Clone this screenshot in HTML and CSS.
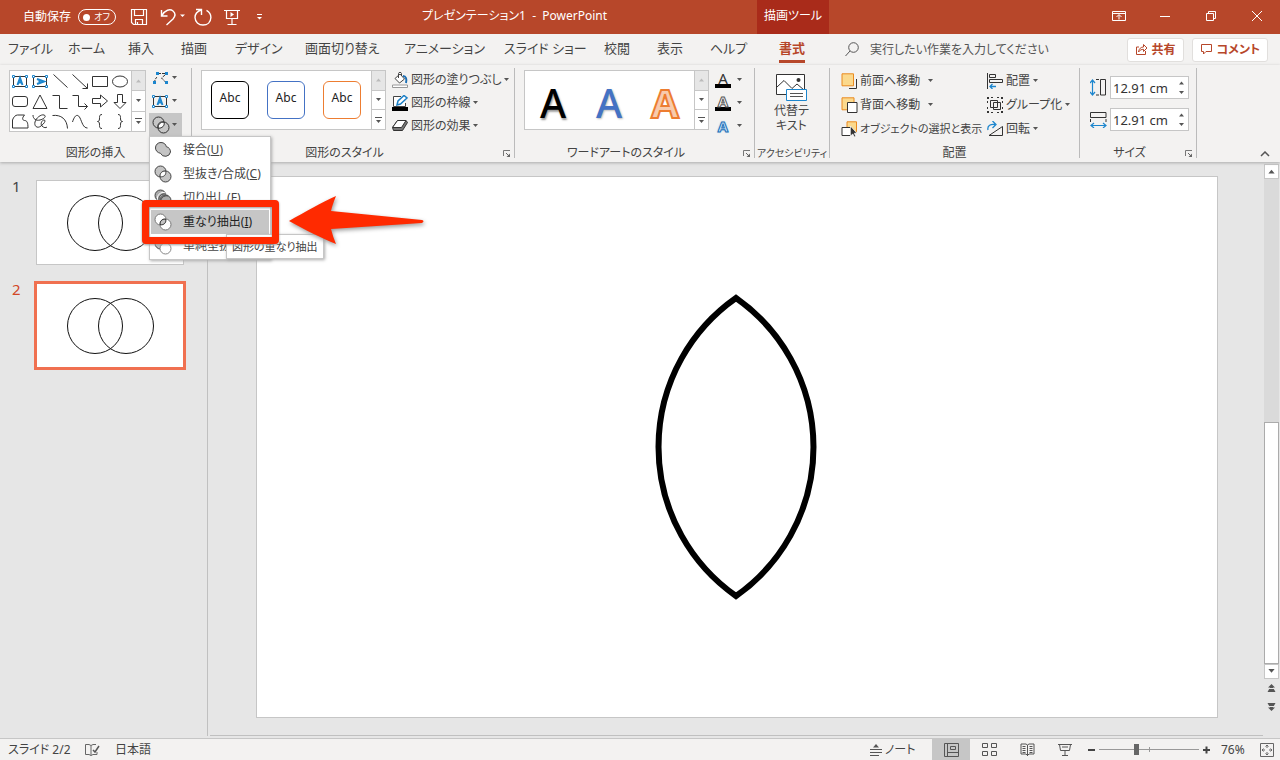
FILE: index.html
```html
<!DOCTYPE html>
<html lang="ja">
<head>
<meta charset="utf-8">
<title>プレゼンテーション1 - PowerPoint</title>
<link rel="stylesheet" href="styles.css">
</head>
<body>
<svg class="defs" aria-hidden="true">
  <symbol id="caret" viewBox="0 0 7 4"><path d="M1 0h5L3.5 3z" fill="#555"/></symbol>
  <symbol id="caret-up" viewBox="0 0 7 4"><path d="M1 3.500h5L3.500 .5z" fill="currentColor"/></symbol>
  <symbol id="caret-more" viewBox="0 0 9 8"><path d="M1 1.500h7" stroke="#555"/><path d="M2 4h5L4.500 7z" fill="#555"/></symbol>
  <symbol id="launcher" viewBox="0 0 9 9"><path d="M1.500 7V1.500H8" fill="none" stroke="#777"/><path d="M8 4.500v3.500H4.500z" fill="#666"/><path d="M4 4l3 3" stroke="#666"/></symbol>
  <symbol id="venn" viewBox="0 0 88 56"><g fill="none" stroke="#111"><circle cx="29" cy="28" r="27.500"/><circle cx="60" cy="28" r="27.500"/></g></symbol>
</svg>

<header class="titlebar">
  <div class="quick">
    <span class="autosave">自動保存</span>
    <button class="toggle" aria-label="自動保存 オフ"><span class="knob"></span><span>オフ</span></button>
    <button class="qbtn save" aria-label="上書き保存"><svg width="18" height="18" viewBox="0 0 18 18"><path d="M1.500 1.500h15v15h-13l-2-2zM4.500 1.500v6h9v-6M5.500 16.500v-5h7v5M7.500 16v-2" fill="none" stroke="#fff" stroke-width="1.200"/></svg></button>
    <button class="qbtn undo" aria-label="元に戻す"><svg width="26" height="18" viewBox="0 0 26 18"><path d="M1.500 2v6h6M2 7.500C5 2 10 .5 13 3c3 2.500 2.500 5 0 8l-6.500 6" fill="none" stroke="#fff" stroke-width="1.400"/><path d="M20 6.500h5L22.500 9z" fill="#fff"/></svg></button>
    <button class="qbtn" aria-label="やり直し"><svg width="18" height="18" viewBox="0 0 18 18"><path d="M2 1.500h5.500V7M7 2C3 3.500 1 6 1 9.500 1.200 14 4.500 17 9 17s7.700-3 7.900-7.500c0-3.500-1.600-5.700-4.400-7.200" fill="none" stroke="#fff" stroke-width="1.400"/></svg></button>
    <button class="qbtn" aria-label="スライド ショー"><svg width="16" height="17" viewBox="0 0 16 17"><path d="M0 1.500h16M2.500 1.500v8h11v-8M8 10v5.500M3.500 15.500h9" fill="none" stroke="#fff" stroke-width="1.200"/><path d="M6.500 3v5L10 5.500z" fill="#fff"/></svg></button>
    <button class="more" aria-label="クイック アクセス ツール バーのユーザー設定"><svg width="7" height="6" viewBox="0 0 7 6"><path d="M1 .5h5" stroke="#fff"/><path d="M1 3h5L3.500 5.500z" fill="#fff"/></svg></button>
  </div>
  <h1 class="doc">プレゼンテーション1&nbsp; -&nbsp; PowerPoint</h1>
  <div class="context">描画ツール</div>
  <div class="window">
    <button aria-label="リボンの表示オプション"><svg width="14" height="12" viewBox="0 0 14 12"><path d="M.5 1.500h13v9H.5zM.5 3.500h13M7 9.500V5M4.500 7L7 4.500 9.500 7" fill="none" stroke="#fff"/></svg></button>
    <button aria-label="最小化"><svg width="10" height="12" viewBox="0 0 10 12"><path d="M0 6.500h10" stroke="#fff"/></svg></button>
    <button aria-label="元に戻す(縮小)"><svg width="10" height="12" viewBox="0 0 10 12"><path d="M.5 3.500h7v7h-7zM2.500 3.500v-2h7v7h-2" fill="none" stroke="#fff"/></svg></button>
    <button aria-label="閉じる"><svg width="10" height="12" viewBox="0 0 10 12"><path d="M0 1l10 10M10 1L0 11" stroke="#fff"/></svg></button>
  </div>
</header>

<nav class="tabs">
  <div class="tablist">
    <button>ファイル</button><button>ホーム</button><button>挿入</button><button>描画</button><button>デザイン</button><button>画面切り替え</button><button>アニメーション</button><button>スライド ショー</button><button>校閲</button><button>表示</button><button>ヘルプ</button><button class="current">書式</button>
  </div>
  <label class="search">
    <svg width="14" height="15" viewBox="0 0 14 15"><circle cx="8.500" cy="5.500" r="4.800" fill="none" stroke="#555"/><path d="M5 9L.5 14" stroke="#555"/></svg>
    <input type="text" aria-label="操作アシスト" placeholder="実行したい作業を入力してください">
  </label>
  <button class="pill"><svg width="13" height="13" viewBox="0 0 13 13"><path d="M4 4H1.500v7.500h9V8M3.500 9c.5-3.500 2.500-5 5-5V1.500L12 5 8.500 8.500V6.300C6.500 6.300 5 7 3.500 9z" fill="none" stroke="#b7472a"/></svg>共有</button>
  <button class="pill"><svg width="13" height="13" viewBox="0 0 13 13"><path d="M1.500 1.500h10v7H6L3.500 11V8.500h-2z" fill="none" stroke="#b7472a"/></svg>コメント</button>
</nav>

<section class="ribbon">
  <div class="group insert">
    <div class="content">
      <div class="gallery shapes">
        <div class="cells">
          <button aria-label="テキスト ボックス"><svg viewBox="0 0 20 20"><path d="M3.500 5.500h13v10h-13z" class="ln"/><path d="M2.500 4.500h2v2h-2zM15.500 4.500h2v2h-2zM2.500 14.500h2v2h-2zM15.500 14.500h2v2h-2z" class="hd"/><path d="M7.500 14L10 7l2.500 7M8.500 11.500h3" class="bl"/></svg></button>
          <button aria-label="縦書きテキスト ボックス"><svg viewBox="0 0 20 20"><path d="M3.500 5.500h13v10h-13z" class="ln"/><path d="M2.500 4.500h2v2h-2zM15.500 4.500h2v2h-2zM2.500 14.500h2v2h-2zM15.500 14.500h2v2h-2z" class="hd"/><path d="M7 8l7 2.500L7 13M9.500 9v3" class="bl"/></svg></button>
          <button aria-label="線"><svg viewBox="0 0 20 20"><path d="M3.500 3.500l14 13" class="ln"/></svg></button>
          <button aria-label="矢印"><svg viewBox="0 0 20 20"><path d="M2.500 3.500l15 14M17.500 12.500v5h-5" class="ln"/></svg></button>
          <button aria-label="正方形/長方形"><svg viewBox="0 0 20 20"><path d="M2.500 5.500h15v10h-15z" class="ln"/></svg></button>
          <button aria-label="楕円"><svg viewBox="0 0 20 20"><ellipse cx="10" cy="10.500" rx="7.500" ry="5.500" class="ln"/></svg></button>
          <button aria-label="角丸四角形"><svg viewBox="0 0 20 20"><rect x="2.500" y="5.500" width="15" height="10" rx="2.500" class="ln"/></svg></button>
          <button aria-label="二等辺三角形"><svg viewBox="0 0 20 20"><path d="M10 4l7 13.500H3z" class="ln"/></svg></button>
          <button aria-label="コネクタ"><svg viewBox="0 0 20 20"><path d="M2.500 4.500h7v13h8" class="ln"/></svg></button>
          <button aria-label="矢印コネクタ"><svg viewBox="0 0 20 20"><path d="M2.500 4.500h6v11h9M14.500 12.500l3 3-3 3" class="ln"/></svg></button>
          <button aria-label="右矢印"><svg viewBox="0 0 20 20"><path d="M2.500 7.500h8V4l7 6-7 6v-3.500h-8z" class="ln"/></svg></button>
          <button aria-label="下矢印"><svg viewBox="0 0 20 20"><path d="M7.500 3.500h5v8h3.500l-6 6-6-6h3.500z" class="ln"/></svg></button>
          <button aria-label="フリーフォーム"><svg viewBox="0 0 20 20"><path d="M2.500 17V9c1-3 3-5 5-5h7c-2.500 3-2.500 5 0 5.500 2.500 0 3.500 2 3.500 7.500z" class="ln"/></svg></button>
          <button aria-label="フリーハンド"><svg viewBox="0 0 20 20"><path d="M3 4c0 4 3 6 7 5s7-4 4-5-8 3-9 7 2 7 6 4 5-6 3-6-4 4-2 6 4 2 5 1" class="ln"/></svg></button>
          <button aria-label="円弧"><svg viewBox="0 0 20 20"><path d="M2.500 4.500C11 3.500 17 8 17.500 17.500" class="ln"/></svg></button>
          <button aria-label="曲線"><svg viewBox="0 0 20 20"><path d="M2.500 11C5 3 8 3 10 7s3 10 7.500 10" class="ln"/></svg></button>
          <button aria-label="左中かっこ"><svg viewBox="0 0 20 20"><path d="M12 3.500c-2 0-2.500 1-2.500 3s0 4-2 4c2 0 2 2 2 4s.5 3 2.500 3" class="ln"/></svg></button>
          <button aria-label="右中かっこ"><svg viewBox="0 0 20 20"><path d="M8 3.500c2 0 2.500 1 2.500 3s0 4 2 4c-2 0-2 2-2 4s-.5 3-2.500 3" class="ln"/></svg></button>
        </div>
        <div class="scrollers"><button class="off" aria-label="上へ"><svg width="7" height="4"><use href="#caret-up"/></svg></button><button aria-label="下へ"><svg width="7" height="4"><use href="#caret"/></svg></button><button aria-label="その他"><svg width="9" height="8"><use href="#caret-more"/></svg></button></div>
      </div>
      <div class="edits">
        <button aria-label="図形の編集"><svg width="18" height="16" viewBox="0 0 18 16"><path d="M2.500 13c0-3 1.500-5 2.500-6M6 3.500h8M13 5l-3.500 3 4 4" class="ln" stroke-dasharray="3 1"/><path d="M4 2h3v3H4zM13 2h3v3h-3zM1 11h3v3H1zM13 11h3v3h-3z" fill="#1c86ce"/></svg><svg width="7" height="4"><use href="#caret"/></svg></button>
        <button aria-label="テキスト ボックスの描画"><svg width="18" height="16" viewBox="0 0 18 16"><path d="M1.500 3.500h13v10h-13z" class="ln"/><path d="M.5 2.500h2v2h-2zM13.500 2.500h2v2h-2zM.5 12.500h2v2h-2zM13.500 12.500h2v2h-2z" class="hd"/><path d="M5.500 12L8 5l2.500 7M6.500 9.500h3" class="bl"/></svg><svg width="7" height="4"><use href="#caret"/></svg></button>
        <div class="anchor">
          <button class="pressed" aria-label="図形の結合"><svg width="18" height="18" viewBox="0 0 18 18"><g fill="none" stroke="#333"><circle cx="6.500" cy="6.500" r="5.500"/><path d="M6 12C5 8 8 5 12 6c1 4-2 6.500-6 6z" fill="#fff"/><circle cx="11.500" cy="11.500" r="5.500"/></g></svg><svg width="7" height="4"><use href="#caret"/></svg></button>
          <div class="menu" role="menu">
            <button role="menuitem"><svg viewBox="0 0 18 18"><path d="M7 1.500c3 0 5 2 5.300 4.200C15 6.200 16.500 8.500 16.500 11a5.300 5.300 0 0 1-10 1.300C3.500 11.800 1.500 9.500 1.500 7A5.300 5.300 0 0 1 7 1.500z" fill="#c4c4c4" stroke="#444"/></svg><span>接合(<u>U</u>)</span></button>
            <button role="menuitem"><svg viewBox="0 0 18 18"><g stroke="#444"><circle cx="6.500" cy="6.500" r="5.500" fill="#c4c4c4"/><circle cx="11.500" cy="11.500" r="5.500" fill="#c4c4c4"/><path d="M6.300 11.700C5.500 8.500 8 5.500 11.700 6.300c.8 3.500-2 6-5.400 5.400z" fill="#fff"/></g></svg><span>型抜き/合成(<u>C</u>)</span></button>
            <button role="menuitem"><svg viewBox="0 0 18 18"><g stroke="#444" fill="#aaa"><circle cx="6.500" cy="6.500" r="5.500"/><circle cx="9" cy="9" r="5.500" stroke="#fff"/><circle cx="11.500" cy="11.500" r="5.500"/><path d="M5 12C4 7 8 4 12 5M7 14c-1-5 3-8 7-7" fill="none"/></g></svg><span>切り出し(<u>F</u>)</span></button>
            <button role="menuitem" class="active"><svg viewBox="0 0 18 18"><g stroke="#777"><circle cx="6.500" cy="6.500" r="5.500" fill="#fff"/><circle cx="11.500" cy="11.500" r="5.500" fill="#fff"/><path d="M6.300 11.700C5.500 8.500 8 5.500 11.700 6.300c.8 3.500-2 6-5.400 5.400z" fill="#c4c4c4" stroke="#222"/></g></svg><span>重なり抽出(<u>I</u>)</span></button>
            <button role="menuitem"><svg viewBox="0 0 18 18"><circle cx="6.500" cy="6.500" r="5.500" fill="#c4c4c4" stroke="#444"/><circle cx="11.500" cy="11.500" r="5.500" fill="#fff" stroke="#888"/></svg><span>単純型抜</span></button>
          </div>
          <div class="tooltip" role="tooltip">図形の重なり抽出</div>
          <div class="frame"></div>
          <svg class="arrow" width="144" height="60" viewBox="0 0 144 60"><path d="M4 29C20 20 37 10 51 4Q47 14 46 19L137 28q3 1 0 3L46 37Q48 45 51 52C37 46 20 38 4 29z" fill="#ff2a00"/></svg>
        </div>
      </div>
    </div>
    <div class="caption">図形の挿入</div>
  </div>

  <div class="group styles">
    <div class="content">
      <div class="gallery">
        <div class="cells"><button class="abc">Abc</button><button class="abc blue">Abc</button><button class="abc orange">Abc</button></div>
        <div class="scrollers"><button class="off" aria-label="上へ"><svg width="7" height="4"><use href="#caret-up"/></svg></button><button aria-label="下へ"><svg width="7" height="4"><use href="#caret"/></svg></button><button aria-label="その他"><svg width="9" height="8"><use href="#caret-more"/></svg></button></div>
      </div>
      <div class="cmds">
        <button><svg width="16" height="16" viewBox="0 0 16 16"><path d="M3 6.500L8 2l4.500 5L7.500 11zM6.500 6V1.500c0-1.500 3-1.500 3 0V4" fill="#fff" stroke="#444"/><path d="M11 4c3 0 4 3 3 7" fill="none" stroke="#1b6fb5" stroke-width="2"/><path d="M.5 13h15v2.500H.5z" fill="#fff" stroke="#999"/></svg>図形の塗りつぶし<svg class="near" width="7" height="4"><use href="#caret"/></svg></button>
        <button><svg width="16" height="16" viewBox="0 0 16 16"><path d="M9 1.500H1.500v10h12V8" fill="#fff" stroke="#444"/><path d="M5 10l1-4 6-5.500 3 2.500L8.500 9z" fill="#fff" stroke="#1b7fc5" stroke-width="1.500"/><path d="M0 12h16v4H0z"/></svg>図形の枠線<svg class="near" width="7" height="4"><use href="#caret"/></svg></button>
        <button><svg width="16" height="16" viewBox="0 0 16 16"><path d="M5.500 2.500h8.500l1.500 2-5 8h-9l-1-3z" fill="#777" stroke="#333"/><path d="M5.500 2.500H14l-4.500 7h-9z" fill="#fff" stroke="#333"/></svg>図形の効果<svg class="near" width="7" height="4"><use href="#caret"/></svg></button>
      </div>
    </div>
    <div class="caption">図形のスタイル</div>
    <button class="launch" aria-label="図形の書式設定"><svg width="9" height="9"><use href="#launcher"/></svg></button>
  </div>

  <div class="group wordart">
    <div class="content">
      <div class="gallery">
        <div class="cells"><button class="wa">A</button><button class="wa blue">A</button><button class="wa orange">A</button></div>
        <div class="scrollers"><button class="off" aria-label="上へ"><svg width="7" height="4"><use href="#caret-up"/></svg></button><button aria-label="下へ"><svg width="7" height="4"><use href="#caret"/></svg></button><button aria-label="その他"><svg width="9" height="8"><use href="#caret-more"/></svg></button></div>
      </div>
      <div class="cmds text">
        <button aria-label="文字の塗りつぶし"><span class="glyph bar">A</span><svg width="7" height="4"><use href="#caret"/></svg></button>
        <button aria-label="文字の輪郭"><span class="glyph bar hollow">A</span><svg width="7" height="4"><use href="#caret"/></svg></button>
        <button aria-label="文字の効果"><span class="glyph glow">A</span><svg width="7" height="4"><use href="#caret"/></svg></button>
      </div>
    </div>
    <div class="caption">ワードアートのスタイル</div>
    <button class="launch" aria-label="文字の書式設定"><svg width="9" height="9"><use href="#launcher"/></svg></button>
  </div>

  <div class="group access">
    <div class="content">
      <button class="tall"><svg width="31" height="28" viewBox="0 0 31 28"><path d="M.5 1.500h28v20H.5z" fill="#fff" stroke="#333"/><path d="M1 14l7-6.500 8 8 5-4.500 7 6" fill="none" stroke="#333"/><circle cx="22.500" cy="7" r="2" fill="#333"/><path d="M10.500 16.500h20v11h-20z" fill="#fff" stroke="#1c86ce"/><path d="M14 20.500h13M14 23.500h13" stroke="#555"/></svg><span>代替テ<br>キスト</span></button>
    </div>
    <div class="caption">アクセシビリティ</div>
  </div>

  <div class="group arrange">
    <div class="content">
      <div class="cmds">
        <button><svg width="17" height="16" viewBox="0 0 17 16"><path d="M1 .8h11.500v12H1z" fill="#fbd98d" stroke="#ea8a1f"/><path d="M15.500 6v9.500H8" fill="none" stroke="#333"/></svg>前面へ移動<svg class="far" width="7" height="4"><use href="#caret"/></svg></button>
        <button><svg width="17" height="16" viewBox="0 0 17 16"><path d="M1 .8h12v12H1z" fill="#fbd98d" stroke="#ea8a1f"/><path d="M6.500 5.500h9.500v10H6.500z" fill="#fff" stroke="#333"/></svg>背面へ移動<svg class="far" width="7" height="4"><use href="#caret"/></svg></button>
        <button class="long"><svg width="17" height="16" viewBox="0 0 17 16"><path d="M6 .8h9.500v10H6z" fill="#fbd98d" stroke="#ea8a1f"/><path d="M1 6.500h8.500v8H1z" fill="#fff" stroke="#333"/><path d="M9.500 5v10l2.300-2 1.500 3 1.500-.7-1.500-3H16z" fill="#333" stroke="#fff" stroke-width=".7"/></svg>オブジェクトの選択と表示</button>
      </div>
      <div class="cmds">
        <button><svg width="17" height="16" viewBox="0 0 17 16"><path d="M.5 0v16M2.500 1.500h6v3h-6zM2.500 6.500h13v3h-13z" fill="none" stroke="#333"/><path d="M9 13.500H3M5.500 11L3 13.500 5.500 16" fill="none" stroke="#1c86ce" stroke-width="1.300"/></svg>配置<svg width="7" height="4"><use href="#caret"/></svg></button>
        <button><svg width="17" height="16" viewBox="0 0 17 16"><path d="M3.500 3.500h7v7h-7zM6.500 5.500h7v7h-7z" fill="none" stroke="#333"/><path d="M4 .5h2M10 .5h2M4 15.500h2M10 15.500h2M.5 4v2M.5 10v2M15.500 4v2M15.500 10v2" fill="none" stroke="#333"/><path d="M0 0h2v2H0zM14 0h2v2h-2zM0 14h2v2H0zM14 14h2v2h-2z" fill="#333"/></svg>グループ化<svg width="7" height="4"><use href="#caret"/></svg></button>
        <button><svg width="17" height="16" viewBox="0 0 17 16"><path d="M15.500 5.500v9H2z" fill="none" stroke="#333"/><path d="M1 9C0 4 4 3 8 3.500M5.500 0L9 3.500 5.500 7" fill="none" stroke="#1c86ce" stroke-width="1.300"/></svg>回転<svg width="7" height="4"><use href="#caret"/></svg></button>
      </div>
    </div>
    <div class="caption">配置</div>
  </div>

  <div class="group size">
    <div class="content">
      <label class="dim"><svg width="17" height="17" viewBox="0 0 17 17"><path d="M2.500 1v15M0 4l2.500-3L5 4M0 13l2.500 3L5 13" fill="none" stroke="#1c86ce" stroke-width="1.200"/><path d="M6 .5h3M6 16h3M10.500.5h5v15.500h-5z" fill="none" stroke="#333"/></svg><span class="spin"><input type="text" value="12.91 cm" aria-label="高さ"><span class="steps"><svg width="7" height="4"><use href="#caret-up"/></svg><svg width="7" height="4"><use href="#caret"/></svg></span></span></label>
      <label class="dim"><svg width="17" height="17" viewBox="0 0 17 17"><path d="M1 14.500h15M4 12l-3 2.500L4 17M13 12l3 2.500-3 2.500" fill="none" stroke="#1c86ce" stroke-width="1.200"/><path d="M.5 8v3M16 8v3M.5 1.500H16v5H.5z" fill="none" stroke="#333"/></svg><span class="spin"><input type="text" value="12.91 cm" aria-label="幅"><span class="steps"><svg width="7" height="4"><use href="#caret-up"/></svg><svg width="7" height="4"><use href="#caret"/></svg></span></span></label>
    </div>
    <div class="caption">サイズ</div>
    <button class="launch" aria-label="サイズと位置"><svg width="9" height="9"><use href="#launcher"/></svg></button>
  </div>
  <button class="collapse" aria-label="リボンを折りたたむ"><svg width="10" height="6" viewBox="0 0 10 6"><path d="M1 5l4-4 4 4" fill="none" stroke="#555" stroke-width="1.500"/></svg></button>
</section>

<main class="work">
  <aside class="thumbs">
    <div class="thumb"><span>1</span><div class="mini"><svg width="88" height="56"><use href="#venn"/></svg></div></div>
    <div class="thumb selected"><span>2</span><div class="mini"><svg width="88" height="56"><use href="#venn"/></svg></div></div>
  </aside>
  <section class="stage">
    <div class="slide"><svg viewBox="0 0 960 540"><path d="M479 121A182 182 0 0 1 479 419A182 182 0 0 1 479 121z" fill="#fff" stroke="#000" stroke-width="6"/></svg></div>
  </section>
  <div class="vscroll">
    <button aria-label="上へスクロール"><svg width="9" height="5"><use href="#caret-up"/></svg></button>
    <div class="track"><div class="thumbbar"></div></div>
    <button aria-label="下へスクロール"><svg width="9" height="5"><use href="#caret"/></svg></button>
    <button class="jump" aria-label="前のスライド"><svg width="9" height="9" viewBox="0 0 9 9"><path d="M4.500 0L8 3.500H6L8.500 8h-8L3 3.500H1z" fill="#555"/><path d="M1 4.500h7" stroke="#e6e6e6"/></svg></button>
    <button class="jump" aria-label="次のスライド"><svg width="9" height="9" viewBox="0 0 9 9"><path d="M4.500 9L8 5.500H6L8.500 1h-8L3 5.500H1z" fill="#555"/><path d="M1 4.500h7" stroke="#e6e6e6"/></svg></button>
  </div>
</main>

<footer class="status">
  <span class="page">スライド 2/2</span>
  <button class="proof" aria-label="スペル チェック"><svg width="16" height="14" viewBox="0 0 16 14"><path d="M7 12.500V2.500L5 1.500H1.500v10H5l2 1 2-1h4V9M7 2.500l2-1h3" fill="none" stroke="#666"/><path d="M9 7l2 2 4-6" fill="none" stroke="#555" stroke-width="1.500"/></svg></button>
  <span>日本語</span>
  <button class="notes"><svg width="12" height="12" viewBox="0 0 12 12"><path d="M6 0l3 3.500H3z" fill="#555"/><path d="M0 5.500h12M0 8.500h12M0 11.500h9" stroke="#555"/></svg>ノート</button>
  <div class="views">
    <button class="on" aria-label="標準"><svg width="15" height="14" viewBox="0 0 15 14"><path d="M.5.5h14v13H.5zM3.500.5v13M3.500 9.500h11M6.500 3.500h5v3h-5z" fill="none" stroke="#555"/></svg></button>
    <button aria-label="スライド一覧"><svg width="15" height="14" viewBox="0 0 15 14"><path d="M.5.5h5v4h-5zM9.500.5h5v4h-5zM.5 8.500h5v4h-5zM9.500 8.500h5v4h-5z" fill="none" stroke="#555"/></svg></button>
    <button aria-label="閲覧表示"><svg width="15" height="14" viewBox="0 0 15 14"><path d="M7.500 13V2L6 1H1v10h5l1.500 1.500L9 11h5V1H9L7.500 2M2.500 3.500h3M2.500 5.500h3M2.500 7.500h3M2.500 9.500h3M9.500 3.500h3M9.500 5.500h3M9.500 7.500h3M9.500 9.500h3" fill="none" stroke="#555"/></svg></button>
    <button aria-label="スライド ショー"><svg width="15" height="14" viewBox="0 0 15 14"><path d="M0 1.500h14M1.500 1.500l1 6h9l1-6M7 8v4.500M4 12.500h6M4 4h6" fill="none" stroke="#555"/></svg></button>
  </div>
  <div class="zoom">
    <button aria-label="縮小"><svg width="7" height="8" viewBox="0 0 7 8"><path d="M0 4h7" stroke="#444" stroke-width="2"/></svg></button>
    <input type="range" min="0" max="100" value="37" aria-label="ズーム">
    <button aria-label="拡大"><svg width="7" height="8" viewBox="0 0 7 8"><path d="M0 4h7M3.500 .5v7" stroke="#444" stroke-width="2"/></svg></button>
  </div>
  <button class="pct">76%</button>
  <button class="fit" aria-label="ウィンドウに合わせる"><svg width="14" height="14" viewBox="0 0 14 14"><path d="M.5.5h13v13H.5zM7 2v3M7 9v3M2 7h3M9 7h3M5.500 3.500L7 2l1.500 1.500M5.500 10.500L7 12l1.500-1.500M3.500 5.500L2 7l1.500 1.500M10.500 5.500L12 7l-1.500 1.500" fill="none" stroke="#666"/></svg></button>
</footer>
</body>
</html>
```
FILE: styles.css
```css
* { box-sizing: border-box; }
body {
  margin: 0;
  height: 100vh;
  display: flex;
  flex-direction: column;
  overflow: hidden;
  background: #e6e6e6;
  color: #444;
  font: 12px/16px "Noto Sans", "Noto Sans CJK JP", sans-serif;
  font-feature-settings: "palt";
}
button, input { font: inherit; font-feature-settings: inherit; color: inherit; border: 0; padding: 0; background: none; }
button { display: flex; align-items: center; white-space: nowrap; }
svg { flex: none; display: block; }
.defs { position: absolute; width: 0; height: 0; }

.titlebar { display: flex; height: 34px; flex: none; background: #b7472a; color: #fff; }
.quick { width: 272px; display: flex; align-items: center; padding-left: 23px; white-space: nowrap; }
.toggle { width: 38px; height: 16px; margin: 0 14px 0 7px; border: 1px solid #fff; border-radius: 8px; justify-content: space-between; padding: 0 5px 0 4px; font-size: 9px; line-height: 12px; }
.knob { width: 7px; height: 7px; border-radius: 50%; background: #fff; }
.save { margin-right: 12px; }
.undo { margin-right: 8px; }
.qbtn + .qbtn + .qbtn { margin-right: 12px; }
.more { padding-left: 4px; }
.doc { flex: 1; margin: 0; font-size: 12px; font-weight: 400; line-height: 32px; text-align: center; }
.context { width: 72px; background: #a92b1a; text-align: center; line-height: 32px; }
.window { width: 451px; display: flex; justify-content: flex-end; }
.window button { width: 46px; height: 32px; justify-content: center; }

.tabs { display: flex; align-items: center; height: 31px; flex: none; background: #f3f2f1; padding-right: 12px; gap: 8px; }
.tablist { display: grid; grid-template-columns: 60px 60px 53px 54px 70px 99px 100px 100px 53px 53px 69px 58px; padding-left: 8px; }
.tablist button { font-size: 13px; line-height: 24px; height: 28px; align-items: flex-start; justify-content: flex-start; }
.tablist .current { width: 26px; color: #b7472a; font-weight: 700; height: 27px; border-bottom: 3px solid #b7472a; }
.search { flex: 1; display: flex; align-items: center; gap: 11px; }
.search input { width: 220px; outline: 0; }
.search input::placeholder { color: #555; opacity: 1; }
.pill { height: 24px; padding: 0 7px; gap: 4px; background: #fff; border: 1px solid #e1dfdd; border-radius: 3px; color: #b7472a; font-weight: 700; }

.ribbon { display: flex; flex: none; position: relative; z-index: 2; height: 97px; background: #f3f2f1; box-shadow: 0 1px 3px #aaa; padding-top: 3px; }
.group { position: relative; height: 90px; border-right: 1px solid #bbb; display: flex; flex-direction: column; justify-content: space-between; }
.content { display: flex; padding-left: 9px; gap: 6px; }
.caption { text-align: center; white-space: nowrap; height: 14px; line-height: 18px; }
.styles .caption, .wordart .caption, .size .caption { padding-right: 17px; }
.access .caption { font-size: 10px; }
.launch { position: absolute; right: 3px; bottom: 0; }
.insert { width: 192px; }
.styles { width: 323px; }
.wordart { width: 240px; }
.access { width: 75px; }
.arrange { width: 250px; }
.size { width: 117px; }
.insert .content { gap: 3px; padding-top: 2px; }

.gallery { display: flex; height: 60px; background: #fff; border: 1px solid #c6c6c6; }
.styles .content, .wordart .content { padding-top: 2px; }
.gallery .cells { width: 169px; display: flex; align-items: center; gap: 18px; padding-left: 9px; }
.gallery.shapes { height: 62px; }
.shapes .cells { width: 121px; display: grid; grid-template-columns: repeat(6, 20px); gap: 0; padding: 0; }
.shapes .cells svg { width: 20px; height: 20px; }
.ln { fill: none; stroke: #333; }
.hd { fill: #fff; stroke: #1c86ce; }
.bl { fill: none; stroke: #1c86ce; stroke-width: 2; }
.scrollers { width: 14px; display: flex; flex-direction: column; border-left: 1px solid #c6c6c6; }
.scrollers button { flex: 1; justify-content: center; border-bottom: 1px solid #c6c6c6; }
.scrollers button:last-child { border-bottom: 0; }
.scrollers .off { background: #e6e6e6; color: #bbb; }

.edits { display: flex; flex-direction: column; margin-top: -4px; }
.edits button { padding-left: 3px; gap: 1px; width: 33px; }
.edits > button { height: 23px; }
.anchor { position: relative; width: 33px; height: 24px; padding-top: 1px; }
.edits .pressed { height: 23px; background: #c6c6c6; }
.menu { position: absolute; top: 24px; left: 0; width: 122px; background: #fff; border: 1px solid #c6c6c6; box-shadow: 1px 1px 3px #aaa; padding: 1px; }
.edits .menu button { width: 100%; height: 24px; padding-left: 3px; gap: 11px; }
.menu svg { width: 18px; height: 18px; }
.menu .active { background: #c6c6c6; color: #222; }
.tooltip { position: absolute; left: 77px; top: 122px; width: 98px; height: 25px; border: 1px solid #c6c6c6; background: #fff; font-size: 11px; line-height: 23px; padding-left: 5px; white-space: nowrap; box-shadow: 1px 1px 3px #aaa; }
.frame { position: absolute; left: -7px; top: 88px; width: 137px; height: 44px; border: 7px solid #ff2a00; border-radius: 4px; filter: drop-shadow(0 1px 1px #999); }
.arrow { position: absolute; left: 136px; top: 80px; filter: drop-shadow(1px 2px 2px #999); }

.abc { width: 38px; height: 38px; justify-content: center; border: 1px solid #000; border-radius: 6px; color: #222; padding-bottom: 4px; }
.abc.blue { border-color: #4472c4; }
.abc.orange { border-color: #ed7d31; }
.wa { width: 38px; height: 50px; justify-content: center; font-size: 40px; font-weight: 500; line-height: 48px; color: #000; padding-top: 5px; text-shadow: 1px 2px 2px #999; }
.wa.blue { color: #4472c4; text-shadow: 1px 1px 2px #bbb; }
.wa.orange { color: #f8cbad; font-weight: 700; -webkit-text-stroke: 2px #ed7d31; text-shadow: none; }
.cmds { display: flex; flex-direction: column; }
.cmds button { height: 23px; gap: 3px; }
.styles .cmds, .wordart .cmds { margin-top: -2px; }
.cmds .near { margin-left: -2px; }
.glyph { width: 16px; height: 16px; font-size: 15px; line-height: 12px; text-align: center; color: #333; }
.cmds.text button { gap: 5px; }
.bar { border-bottom: 4px solid #000; }
.hollow { color: #fff; font-weight: 700; -webkit-text-stroke: 1px #555; }
.glow { color: #cce5f7; font-weight: 700; line-height: 16px; -webkit-text-stroke: 1px #1c70b8; text-shadow: 0 0 2px #6ab5ea; }
.tall { flex-direction: column; padding: 5px 0 0 10px; gap: 2px; line-height: 15px; }
.arrange .content { padding: 1px 0 0 11px; gap: 9px; }
.arrange .cmds button { height: 24px; gap: 2px; }
.arrange .cmds { width: 137px; }
.arrange .long { font-size: 11px; }
.arrange .far { margin-left: 5px; }
.size .content { flex-direction: column; gap: 9px; padding: 8px 0 0 10px; }
.dim { display: flex; align-items: center; gap: 3px; }
.spin { display: flex; align-items: center; width: 79px; height: 23px; background: #fff; border: 1px solid #c6c6c6; padding: 0 4px 0 2px; }
.spin input { width: 65px; font-size: 13px; height: 20px; color: #333; }
.steps { display: flex; flex-direction: column; gap: 6px; color: #555; }
.collapse { position: absolute; right: 10px; bottom: 5px; }

.work { flex: 1; display: flex; min-height: 0; }
.thumbs { width: 208px; border-right: 1px solid #c0c0c0; margin-bottom: 2px; padding-top: 18px; display: flex; flex-direction: column; gap: 16px; }
.thumb { display: flex; padding-left: 12px; }
.thumb > span { width: 22px; font-size: 15px; line-height: 12px; }
.mini { width: 148px; height: 85px; margin-left: 2px; background: #fff; border: 1px solid #c6c6c6; display: flex; justify-content: center; padding-top: 14px; }
.selected > span { color: #d24726; padding-top: 2px; }
.selected .mini { width: 152px; height: 89px; margin-left: 0; border: 3px solid #f07050; padding-top: 14px; }
.stage { flex: 1; margin: 0 1px 2px 2px; border-bottom: 1px solid #c0c0c0; padding: 14px 45px 17px 46px; }
.slide { background: #fff; border: 1px solid #c6c6c6; height: 100%; }
.slide svg { width: 100%; height: 100%; }
.vscroll { width: 16px; padding: 2px 1px 23px 0; display: flex; flex-direction: column; }
.vscroll button { height: 15px; flex: none; background: #fff; border: 1px solid #c6c6c6; justify-content: center; color: #555; }
.vscroll .jump { background: none; border: 0; height: 18px; }
.track { flex: 1; display: flex; flex-direction: column; justify-content: flex-end; background: #dadada; }
.thumbbar { height: 50%; background: #fff; border: 1px solid #ababab; }

.status { display: flex; align-items: center; height: 22px; flex: none; background: #f3f2f1; border-top: 1px solid #c6c6c6; padding-left: 8px; }
.page { width: 76px; }
.proof { width: 31px; }
.notes { margin-left: auto; gap: 3px; width: 62px; }
.views { display: flex; }
.views button { width: 38px; height: 21px; justify-content: center; }
.views .on { background: #c6c6c6; }
.zoom { display: flex; align-items: center; gap: 4px; padding-left: 4px; width: 137px; }
.zoom input { appearance: none; width: 100px; height: 12px; margin: 0; background: linear-gradient(#999, #999) center / 100% 1px no-repeat, linear-gradient(#999, #999) center / 1px 5px no-repeat; }
.zoom input::-webkit-slider-thumb { appearance: none; width: 5px; height: 11px; background: #666; }
.pct { width: 39px; }
.fit { width: 20px; }
```
